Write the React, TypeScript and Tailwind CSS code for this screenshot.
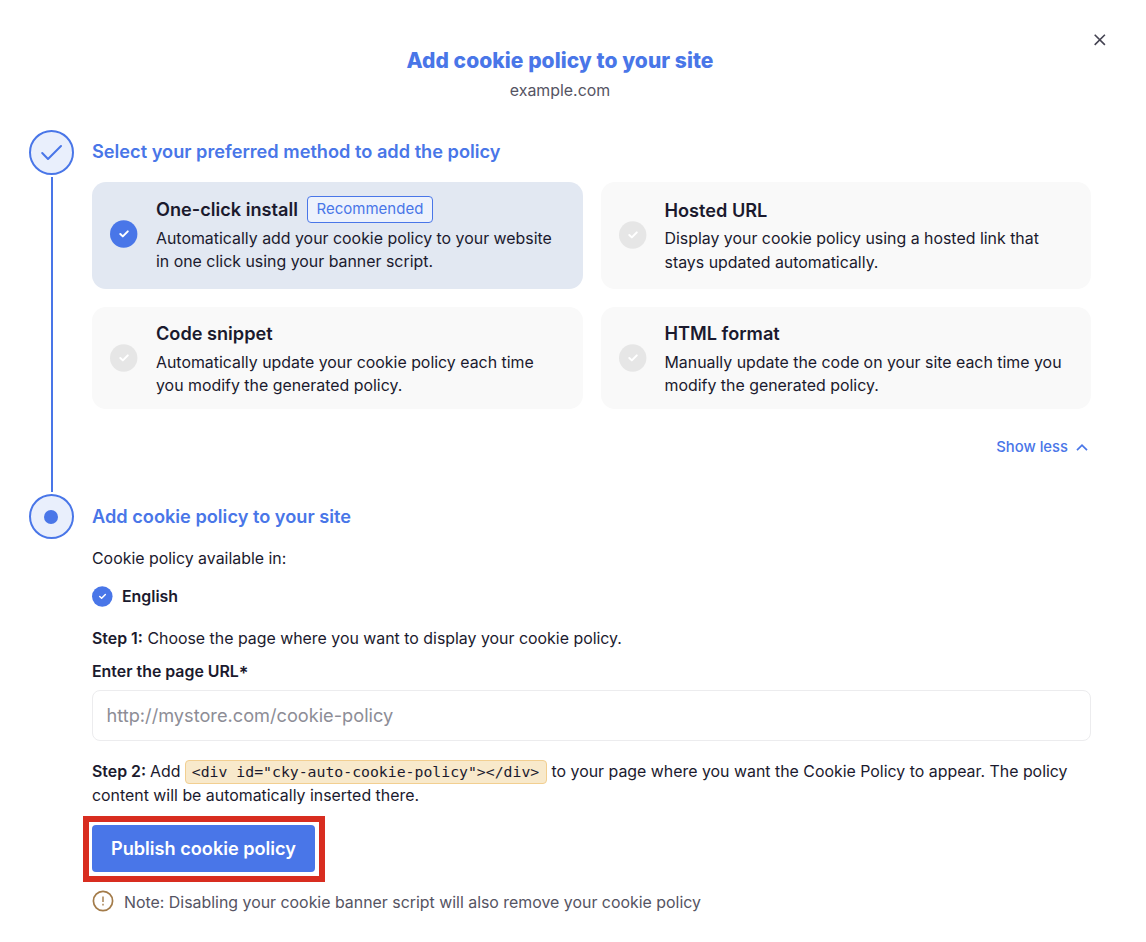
import React from 'react';

const methods = [
  {
    title: 'One-click install',
    lines: ['Automatically add your cookie policy to your website', 'in one click using your banner script.'],
    selected: true,
    recommended: true,
    card: 'pb-[3px]',
    spacing: 'mt-1 leading-[23px]',
  },
  {
    title: 'Hosted URL',
    lines: ['Display your cookie policy using a hosted link that', 'stays updated automatically.'],
    card: 'pb-px',
    spacing: 'mt-[3px] leading-[24px]',
  },
  {
    title: 'Code snippet',
    lines: ['Automatically update your cookie policy each time', 'you modify the generated policy.'],
    card: '',
    spacing: 'mt-1 leading-[23px]',
  },
  {
    title: 'HTML format',
    lines: ['Manually update the code on your site each time you', 'modify the generated policy.'],
    card: '',
    spacing: 'mt-1 leading-[23px]',
  },
];

const CheckBadge = ({ className }: { className: string }) => (
  <svg viewBox="0 0 28 28" className={`shrink-0 ${className}`} fill="none">
    <circle cx="13.7" cy="14" r="13.7" fill="currentColor" />
    <path d="M10.3 14l2.5 2.4 5-5" stroke="#fff" strokeWidth="2" strokeLinecap="round" strokeLinejoin="round" />
  </svg>
);

const StepCircle = ({ children }: { children: React.ReactNode }) => (
  <div className="flex h-[46px] w-[46px] shrink-0 items-start justify-end">
    <div className="flex h-[45px] w-[45px] items-center justify-center rounded-full border-2 border-[#4976e8] bg-[#e9effc]">
      {children}
    </div>
  </div>
);

const MethodCard = ({ method }: { method: (typeof methods)[number] }) => (
  <div
    className={`flex items-center rounded-[14px] pl-[18px] ${method.card} ${method.selected ? 'bg-[#e2e8f2]' : 'bg-[#f9f9f9]'}`}
  >
    <CheckBadge className={`h-7 w-7 ${method.selected ? 'text-[#4976e8]' : 'text-[#e6e6e6]'}`} />
    <div className="ml-[18px] whitespace-nowrap">
      <div className="flex h-7 items-center">
        <h3 className="text-[18.15px] leading-7 font-semibold">{method.title}</h3>
        {method.recommended && (
          <span className="ml-[9px] flex h-[27px] w-[126px] items-center justify-center rounded-[4px] border border-[#4976e8] bg-[#edf2fc] text-[15px] text-[#4976e8]">
            Recommended
          </span>
        )}
      </div>
      <p className={`text-[15.9px] ${method.spacing}`}>
        {method.lines[0]}
        <br />
        {method.lines[1]}
      </p>
    </div>
  </div>
);

const App = () => {
  return (
    <main className="h-[942px] w-[1146px] overflow-hidden bg-white font-['Inter',sans-serif] text-[#1b1a2e]">
      <header className="flex h-[130px] pt-[30px]">
        <div className="ml-[28px] flex-1 pt-[17px] text-center">
          <h1 className="text-[21px] leading-7 font-extrabold tracking-[0.06px] text-[#4976e8]">
            Add cookie policy to your site
          </h1>
          <p className="mt-1 text-[15.9px] leading-6 text-[#555463]">example.com</p>
        </div>
        <button aria-label="Close" className="mr-[36px] ml-[-2px] h-5 w-5 shrink-0">
          <svg viewBox="0 0 20 20" className="h-5 w-5" fill="none" stroke="#444352" strokeWidth="1.6">
            <path d="M4.7 4.7l10.2 10.2M14.9 4.7L4.7 14.9" />
          </svg>
        </button>
      </header>

      {/* Step one: install method */}
      <section className="flex h-[364px] pl-[28px]">
        <div className="flex w-[46px] flex-col items-center">
          <StepCircle>
            <svg viewBox="0 0 24 24" className="h-6 w-6" fill="none" stroke="#4976e8" strokeWidth="2">
              <path d="M2.2 12l5.8 6L21 5" strokeLinecap="round" strokeLinejoin="round" />
            </svg>
          </StepCircle>
          <div className="mt-px mb-0.5 ml-px w-0.5 flex-1 bg-[#4976e8]" />
        </div>
        <div className="ml-[18px] w-[999px]">
          <h2 className="mt-[7px] text-[18.2px] leading-7 font-semibold text-[#4976e8]">
            Select your preferred method to add the policy
          </h2>
          <div className="mt-[17px] grid grid-cols-2 grid-rows-[107px_102px] gap-[18px]">
            {methods.map((method) => (
              <MethodCard key={method.title} method={method} />
            ))}
          </div>
          <button className="mt-[26px] mr-[3px] ml-auto flex h-6 items-center gap-2 text-[14.8px] font-medium text-[#4976e8]">
            <span className="pt-px">Show less</span>
            <svg viewBox="0 0 12 12" className="h-3 w-3" fill="none" stroke="currentColor" strokeWidth="1.7">
              <path d="M1 9.2l5-5 5 5" />
            </svg>
          </button>
        </div>
      </section>

      {/* Step two: publish */}
      <section className="flex pl-[28px]">
        <StepCircle>
          <span className="mr-px h-3.5 w-3.5 rounded-full bg-[#4976e8]" />
        </StepCircle>
        <div className="ml-[18px] w-[999px] text-[15.9px] whitespace-nowrap">
          <h2 className="mt-[8px] text-[18.2px] leading-7 font-semibold text-[#4976e8]">
            Add cookie policy to your site
          </h2>
          <p className="mt-[17px] leading-6">Cookie policy available in:</p>
          <div className="mt-[13px] flex h-6 items-center gap-[9px]">
            <CheckBadge className="h-[21px] w-[21px] text-[#4976e8]" />
            <span className="pt-px font-semibold">English</span>
          </div>
          <p className="mt-[19px] leading-6">
            <b className="font-semibold">Step 1:</b> Choose the page where you want to display your cookie policy.
          </p>
          <label htmlFor="page-url" className="mt-[9px] block leading-6 font-semibold">
            Enter the page URL<span className="relative top-[3px] text-[18px] leading-none">*</span>
          </label>
          <input
            id="page-url"
            placeholder="http://mystore.com/cookie-policy"
            className="mt-[6px] block h-[51px] w-full rounded-[8px] border border-[#ececee] px-[13.5px] pb-px text-[18.2px] placeholder:text-[#8d8d96]"
          />
          <div className="mt-[19px] flex h-6 items-center">
            <b className="font-semibold">Step 2:</b>
            <span className="ml-[4px]">Add</span>
            <code className="mr-[5px] ml-[4px] flex h-6 w-[362px] items-center justify-center rounded-[4px] border border-[#f2cf91] bg-[#f8e9cb] font-['DejaVu_Sans_Mono',monospace] text-[14.8px]">
              {'<div id="cky-auto-cookie-policy"></div>'}
            </code>
            <span>to your page where you want the Cookie Policy to appear. The policy</span>
          </div>
          <p className="leading-[23px]">content will be automatically inserted there.</p>
          <div className="mt-[9px] ml-[-9px] h-[66px] w-[242px] border-[6px] border-[#d82d20] p-[3px] pr-1 pb-1">
            <button className="h-full w-full rounded-[4px] bg-[#4976e8] pt-px text-[18.15px] font-semibold text-white">
              Publish cookie policy
            </button>
          </div>
          <div className="mt-[7px] flex h-6 items-center gap-[10px] text-[#555463]">
            <svg viewBox="0 0 22 22" className="h-[22px] w-[22px]" fill="none" stroke="#a37b49">
              <circle cx="11" cy="11" r="9.6" strokeWidth="1.7" />
              <path d="M11 6.5v5.5M11 13.8v1.6" strokeWidth="1.4" />
            </svg>
            <p className="pt-[3px]">Note: Disabling your cookie banner script will also remove your cookie policy</p>
          </div>
        </div>
      </section>
    </main>
  );
};

export default App;
